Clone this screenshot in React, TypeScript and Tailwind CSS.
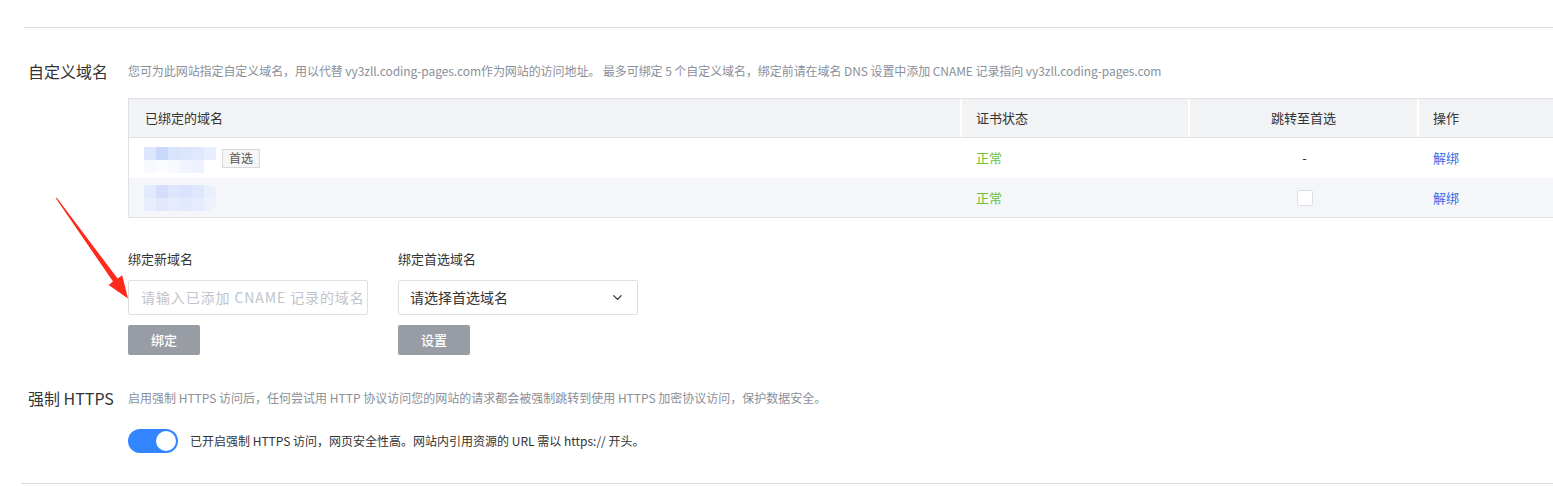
import { ChevronDown } from "lucide-react";

const font = "font-['Noto_Sans_CJK_SC','Liberation_Sans',sans-serif]";

function Blob({ rows }: { rows: string[][] }) {
  return (
    <div className="flex flex-col blur-[0.6px]">
      {rows.map((r, i) => (
        <div key={i} className="flex">
          {r.map((c, j) => (
            <div key={j} className="w-[12px] h-[13px]" style={{ background: c }} />
          ))}
        </div>
      ))}
    </div>
  );
}

function Arrow() {
  return (
    <svg
      className="absolute left-0 top-0 pointer-events-none"
      width="160"
      height="320"
      viewBox="0 0 160 320"
    >
      <polygon
        points="56.6,197.4 117.6,278.6 122.2,275.2 128,298.5 108.6,285 113,281.6 56,198.6"
        fill="#ff2a1a"
      />
    </svg>
  );
}

export default function App() {
  return (
    <div className={`relative w-full h-[486px] bg-white overflow-hidden ${font}`}>
      <div className="h-[27px]" />
      <div className="ml-[24px] border-t border-[#dcdde3]" />

      {/* 自定义域名 */}
      <div className="flex mt-[33px]">
        <div className="w-[128px] pl-[28px] text-[16px] leading-[20px] text-[#333]">自定义域名</div>
        <div className="flex-1">
          <div className="text-[12px] leading-[20px] text-[#8a8f99] whitespace-nowrap tracking-[-0.07px]">
            您可为此网站指定自定义域名，用以代替 vy3zll.coding-pages.com作为网站的访问地址。 最多可绑定 5 个自定义域名，绑定前请在域名 DNS 设置中添加 CNAME 记录指向 vy3zll.coding-pages.com
          </div>

          <div className="mt-[17px] border border-r-0 border-[#dfe1e6] text-[13px] text-[#333]">
            <div className="grid grid-cols-[833px_228px_229px_1fr] h-[39px] bg-[#f2f3f5] border-b border-[#dfe1e6]">
              <div className="flex items-center pl-[16px] border-r-2 border-white">已绑定的域名</div>
              <div className="flex items-center pl-[14px] border-r-2 border-white">证书状态</div>
              <div className="flex items-center justify-center border-r-2 border-white">跳转至首选</div>
              <div className="flex items-center pl-[14px]">操作</div>
            </div>
            <div className="grid grid-cols-[833px_228px_229px_1fr] h-[40px] bg-white">
              <div className="flex items-center pl-[15px]">
                <div className="pt-[4px]">
                  <Blob
                    rows={[
                      ["#dde6fc", "#c9d8fb", "#d9e4fc", "#dbe5fc", "#dfe8fc", "#e7eefd"],
                      ["#f8f9fe", "#fbfcff", "#f8f9fe", "#f1f4fe", "#eef2fe", "#ffffff"],
                    ]}
                  />
                </div>
                <span className="ml-[6px] h-[19px] px-[6px] flex items-center text-[12px] text-[#555] bg-[#f6f6f6] border border-[#d6d8dc]">
                  首选
                </span>
              </div>
              <div className="flex items-center pl-[14px] text-[#67c23a]">正常</div>
              <div className="flex items-center justify-center">-</div>
              <div className="flex items-center pl-[14px] text-[#2f6ee8]">解绑</div>
            </div>
            <div className="grid grid-cols-[833px_228px_229px_1fr] h-[39px] bg-[#f5f6fa]">
              <div className="flex items-center pl-[15px]">
                <div className="rounded-r-[8px] overflow-hidden">
                  <Blob
                    rows={[
                      ["#e4eafd", "#d2defb", "#dde6fc", "#d9e3fc", "#dfe7fc", "#e9effd"],
                      ["#e8eefd", "#e1e8fc", "#e6ecfd", "#e2e9fc", "#e6ecfd", "#edf1fe"],
                    ]}
                  />
                </div>
              </div>
              <div className="flex items-center pl-[14px] text-[#67c23a]">正常</div>
              <div className="flex items-center justify-center">
                <span className="w-[16px] h-[16px] rounded-[2px] bg-white border border-[#dcdfe6]" />
              </div>
              <div className="flex items-center pl-[14px] text-[#2f6ee8]">解绑</div>
            </div>
          </div>

          {/* 绑定表单 */}
          <div className="flex gap-[30px] mt-[32px]">
            <div className="w-[240px]">
              <div className="text-[13px] leading-[18px] text-[#333]">绑定新域名</div>
              <div className="mt-[12px] h-[35px] border border-[#dcdfe6] rounded-[2px] flex items-center pl-[12px] pr-[2px] overflow-hidden">
                <span className="text-[14px] text-[#c0c4cc] whitespace-nowrap tracking-[0.9px]">请输入已添加 CNAME 记录的域名</span>
              </div>
              <button className="mt-[10px] w-[72px] h-[30px] rounded-[2px] bg-[#979ca5] text-white text-[13px] font-medium">
                绑定
              </button>
            </div>
            <div className="w-[240px]">
              <div className="text-[13px] leading-[18px] text-[#333]">绑定首选域名</div>
              <div className="mt-[12px] h-[35px] border border-[#dcdfe6] rounded-[2px] flex items-center justify-between pl-[11px] pr-[12px]">
                <span className="text-[14px] text-[#333]">请选择首选域名</span>
                <ChevronDown size={15} strokeWidth={2} className="text-[#333]" />
              </div>
              <button className="mt-[10px] w-[72px] h-[30px] rounded-[2px] bg-[#979ca5] text-white text-[13px] font-medium">
                设置
              </button>
            </div>
          </div>
        </div>
      </div>

      {/* 强制 HTTPS */}
      <div className="flex mt-[33px]">
        <div className="w-[128px] pl-[28px] text-[16px] leading-[20px] text-[#333]">强制 HTTPS</div>
        <div className="flex-1">
          <div className="text-[12px] leading-[20px] text-[#8a8f99] whitespace-nowrap">
            启用强制 HTTPS 访问后，任何尝试用 HTTP 协议访问您的网站的请求都会被强制跳转到使用 HTTPS 加密协议访问，保护数据安全。
          </div>
          <div className="flex items-center mt-[21px]">
            <div className="w-[50px] h-[24px] rounded-full bg-[#3385ff] flex items-center justify-end pr-[2px]">
              <div className="w-[20px] h-[20px] rounded-full bg-white" />
            </div>
            <span className="ml-[12px] text-[12px] text-[#333]">
              已开启强制 HTTPS 访问，网页安全性高。网站内引用资源的 URL 需以 https:// 开头。
            </span>
          </div>
        </div>
      </div>

      <div className="mt-[30px] ml-[21px] border-t border-[#dcdde3]" />

      <Arrow />
    </div>
  );
}
